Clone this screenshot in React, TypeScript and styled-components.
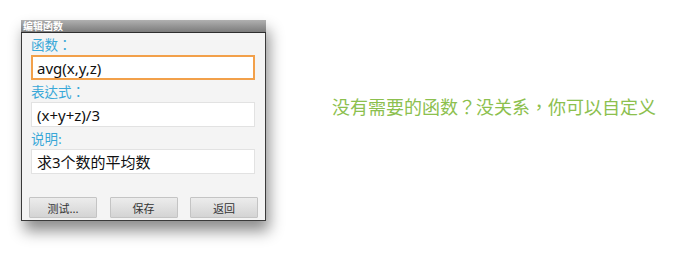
import styled, { createGlobalStyle } from "styled-components";

const GlobalStyle = createGlobalStyle`
  html, body {
    margin: 0;
    padding: 0;
    background: #ffffff;
  }
  body {
    font-family: "Noto Sans", "Noto Sans CJK SC", sans-serif;
  }
`;

const Page = styled.div`
  width: 679px;
  height: 260px;
  display: flex;
  flex-direction: row;
  align-items: flex-start;
  padding: 20px 0 0 21px;
  box-sizing: border-box;
`;

const Dialog = styled.div`
  width: 245px;
  display: flex;
  flex-direction: column;
  box-shadow: 3px 10px 14px rgba(0, 0, 0, 0.45);
`;

const TitleBar = styled.div`
  height: 12px;
  background: linear-gradient(#b0b0b0, #7c7c7c);
  color: #ffffff;
  font-size: 10px;
  line-height: 12px;
  padding-left: 2px;
  border-bottom: 1px solid #2e2e2e;
  font-family: "Noto Sans CJK SC", sans-serif;
  font-weight: 700;
`;

const Body = styled.div`
  background: #f4f4f4;
  border: 1px solid #3a3a3a;
  border-top: none;
  padding: 0 10px 2px 9px;
  display: flex;
  flex-direction: column;
`;

const Label = styled.div`
  height: 22px;
  line-height: 22px;
  font-size: 13.5px;
  color: #39a8d8;
  font-family: "Noto Sans CJK TC", sans-serif;
`;

const Input = styled.div<{ $focused?: boolean }>`
  height: 25px;
  box-sizing: border-box;
  background: #ffffff;
  border: ${(p) => (p.$focused ? "2px solid #f2a04a" : "1px solid #e2e2e2")};
  padding-left: ${(p) => (p.$focused ? "4px" : "5px")};
  display: flex;
  align-items: center;
  font-size: 15px;
  color: #111111;
  font-family: "Noto Sans", "Noto Sans CJK SC", sans-serif;
`;

const ButtonRow = styled.div`
  display: flex;
  justify-content: space-between;
  margin: 23px -3px 0 -2px;
`;

const Button = styled.div`
  width: 68px;
  height: 21px;
  box-sizing: border-box;
  background: linear-gradient(#ececec, #d4d4d4);
  border: 1px solid #c4c4c4;
  border-radius: 1px;
  display: flex;
  align-items: center;
  justify-content: center;
  font-size: 11px;
  color: #333333;
  font-family: "Noto Sans CJK SC", sans-serif;
`;

const Tagline = styled.div`
  margin: 74px 0 0 66px;
  font-size: 18px;
  line-height: 24px;
  color: #8cc04e;
  font-family: "Noto Sans CJK TC", sans-serif;
  white-space: nowrap;
`;

export default function App() {
  return (
    <>
      <GlobalStyle />
      <Page>
        <Dialog>
          <TitleBar>编辑函数</TitleBar>
          <Body>
            <Label>函数：</Label>
            <Input $focused>avg(x,y,z)</Input>
            <Label>表达式：</Label>
            <Input>(x+y+z)/3</Input>
            <Label>说明:</Label>
            <Input>求3个数的平均数</Input>
            <ButtonRow>
              <Button>测试...</Button>
              <Button>保存</Button>
              <Button>返回</Button>
            </ButtonRow>
          </Body>
        </Dialog>
        <Tagline>没有需要的函数？没关系，你可以自定义</Tagline>
      </Page>
    </>
  );
}
